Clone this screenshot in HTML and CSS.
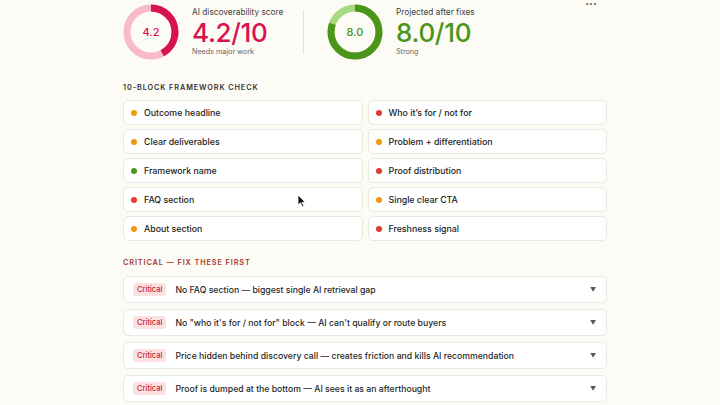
FILE: index.html
```html
<!DOCTYPE html>
<html>
<head>
<meta charset="utf-8">
<link rel="stylesheet" href="styles.css">
</head>
<body>
<div class="page">
  <div class="more">&#8226;&#8226;&#8226;</div>
  <div class="scores">
    <div class="score">
      <div class="ring">
        <svg width="56" height="56" viewBox="0 0 56 56">
          <circle cx="28" cy="28" r="24" fill="none" stroke="#f8b9c9" stroke-width="7"/>
          <circle cx="28" cy="28" r="24" fill="none" stroke="#d8124f" stroke-width="7" stroke-dasharray="63.3 150.8" transform="rotate(-90 28 28)"/>
        </svg>
        <span class="ring-val red">4.2</span>
      </div>
      <div class="score-text">
        <div class="score-label">AI discoverability score</div>
        <div class="score-big red">4.2/10</div>
        <div class="score-sub">Needs major work</div>
      </div>
    </div>
    <div class="divider"></div>
    <div class="score">
      <div class="ring">
        <svg width="56" height="56" viewBox="0 0 56 56">
          <circle cx="28" cy="28" r="24" fill="none" stroke="#a9d97f" stroke-width="7"/>
          <circle cx="28" cy="28" r="24" fill="none" stroke="#4b951a" stroke-width="7" stroke-dasharray="120.6 150.8" transform="rotate(-90 28 28)"/>
        </svg>
        <span class="ring-val green">8.0</span>
      </div>
      <div class="score-text">
        <div class="score-label">Projected after fixes</div>
        <div class="score-big green">8.0/10</div>
        <div class="score-sub">Strong</div>
      </div>
    </div>
  </div>

  <div class="section-title">10-BLOCK FRAMEWORK CHECK</div>
  <div class="grid">
    <div class="item"><span class="dot amber"></span>Outcome headline</div>
    <div class="item"><span class="dot red-d"></span>Who it’s for / not for</div>
    <div class="item"><span class="dot amber"></span>Clear deliverables</div>
    <div class="item"><span class="dot amber"></span>Problem + differentiation</div>
    <div class="item"><span class="dot green-d"></span>Framework name</div>
    <div class="item"><span class="dot red-d"></span>Proof distribution</div>
    <div class="item"><span class="dot red-d"></span>FAQ section</div>
    <div class="item"><span class="dot amber"></span>Single clear CTA</div>
    <div class="item"><span class="dot amber"></span>About section</div>
    <div class="item"><span class="dot red-d"></span>Freshness signal</div>
  </div>

  <div class="section-title critical">CRITICAL — FIX THESE FIRST</div>
  <div class="list">
    <div class="row"><span class="badge">Critical</span><span class="row-text">No FAQ section — biggest single AI retrieval gap</span><span class="caret">&#9660;</span></div>
    <div class="row"><span class="badge">Critical</span><span class="row-text">No "who it's for / not for" block — AI can't qualify or route buyers</span><span class="caret">&#9660;</span></div>
    <div class="row"><span class="badge">Critical</span><span class="row-text">Price hidden behind discovery call — creates friction and kills AI recommendation</span><span class="caret">&#9660;</span></div>
    <div class="row"><span class="badge">Critical</span><span class="row-text">Proof is dumped at the bottom — AI sees it as an afterthought</span><span class="caret">&#9660;</span></div>
  </div>
</div>
<svg class="cursor" width="10" height="14" viewBox="0 0 10 14"><path d="M1 1 L1 11 L3.5 8.8 L5.3 12.8 L6.8 12.1 L5 8.3 L8.3 8.3 Z" fill="#111" stroke="#fff" stroke-width="0.8"/></svg>
</body>
</html>
```
FILE: styles.css
```css
html, body {
  margin: 0;
  padding: 0;
  background: #fcfbf5;
  font-family: Inter, "Liberation Sans", sans-serif;
  color: #1f1f1f;
}
.page {
  position: relative;
  width: 484px;
  margin-left: 123px;
  padding-top: 4px;
}
.more {
  position: absolute;
  right: 10px;
  top: 0;
  font-size: 6px;
  letter-spacing: 0.5px;
  color: #333;
}
.scores {
  display: flex;
  align-items: center;
  height: 56px;
}
.score {
  display: flex;
  align-items: center;
  gap: 13px;
}
.ring {
  position: relative;
  width: 56px;
  height: 56px;
}
.ring svg { display: block; }
.ring-val {
  position: absolute;
  inset: 0;
  display: flex;
  align-items: center;
  justify-content: center;
  font-size: 11px;
  font-weight: 500;
}
.red { color: #d8124f; }
.green { color: #4b951a; }
.score-text {
  display: flex;
  flex-direction: column;
  width: 90px;
}
.score-label {
  font-size: 8.3px;
  color: #444;
  line-height: 11px;
  white-space: nowrap;
}
.score-big {
  font-size: 26px;
  font-weight: 500;
  line-height: 29px;
  letter-spacing: -0.3px;
  white-space: nowrap;
}
.score-sub {
  font-size: 7.2px;
  color: #666;
  line-height: 10px;
  white-space: nowrap;
}
.divider {
  width: 1px;
  height: 44px;
  background: #e4e1d8;
  margin: 0 23px 0 21px;
}
.section-title {
  margin-top: 23px;
  font-size: 7.3px;
  font-weight: 600;
  letter-spacing: 0.9px;
  color: #333;
  line-height: 10px;
}
.grid {
  display: grid;
  grid-template-columns: 1fr 1fr;
  gap: 4px 5px;
  margin-top: 7px;
}
.item {
  height: 25px;
  box-sizing: border-box;
  background: #fff;
  border: 1px solid #ebe8e0;
  border-radius: 5px;
  display: flex;
  align-items: center;
  padding-left: 7px;
  font-size: 8.8px;
  font-weight: 500;
  color: #222;
}
.dot {
  width: 6px;
  height: 6px;
  border-radius: 50%;
  margin-right: 7px;
}
.amber { background: #f0990f; }
.red-d { background: #e03c2c; }
.green-d { background: #4b951a; }
.section-title.critical {
  margin-top: 17px;
  color: #a3392e;
}
.list {
  display: flex;
  flex-direction: column;
  gap: 6px;
  margin-top: 8px;
}
.row {
  height: 27px;
  box-sizing: border-box;
  background: #fff;
  border: 1px solid #ebe8e0;
  border-radius: 5px;
  display: flex;
  align-items: center;
  padding: 0 10px 0 9px;
}
.badge {
  background: #fde0e2;
  color: #c0233a;
  font-size: 7.5px;
  font-weight: 500;
  padding: 2px 4px;
  border-radius: 3px;
  margin-right: 9px;
}
.row-text {
  flex: 1;
  font-size: 8.7px;
  font-weight: 500;
  color: #1f1f1f;
}
.caret {
  font-size: 6px;
  color: #555;
}
.cursor {
  position: absolute;
  left: 297px;
  top: 194px;
}
```
